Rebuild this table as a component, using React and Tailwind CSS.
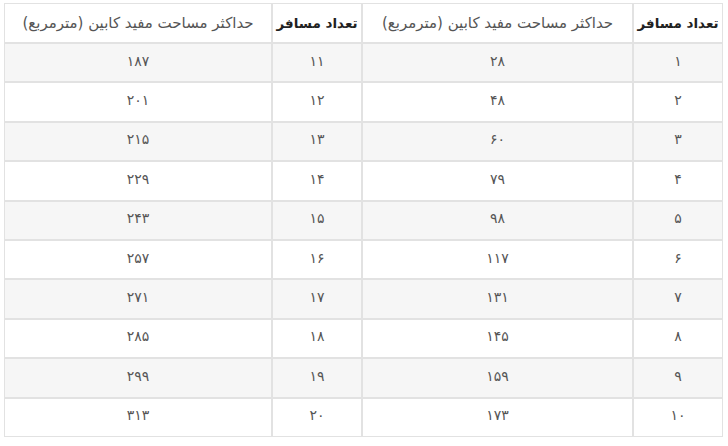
const rows = [
  ["۱", "۲۸", "۱۱", "۱۸۷"],
  ["۲", "۴۸", "۱۲", "۲۰۱"],
  ["۳", "۶۰", "۱۳", "۲۱۵"],
  ["۴", "۷۹", "۱۴", "۲۲۹"],
  ["۵", "۹۸", "۱۵", "۲۴۳"],
  ["۶", "۱۱۷", "۱۶", "۲۵۷"],
  ["۷", "۱۳۱", "۱۷", "۲۷۱"],
  ["۸", "۱۴۵", "۱۸", "۲۸۵"],
  ["۹", "۱۵۹", "۱۹", "۲۹۹"],
  ["۱۰", "۱۷۳", "۲۰", "۳۱۳"],
];

export default function App() {
  const cell = "border border-[#e2e2e2] text-center align-middle p-0";
  return (
    <div className="w-[728px] h-[446px] bg-white pt-[3px] pl-[4px]" style={{ fontFamily: '"DejaVu Sans", sans-serif' }}>
      <table dir="rtl" className="w-[719px] border-separate border-spacing-0 table-fixed text-[14px] text-[#555]">
        <colgroup>
          <col className="w-[90px]" />
          <col className="w-[271px]" />
          <col className="w-[90px]" />
          <col className="w-[268px]" />
        </colgroup>
        <thead>
          <tr className="h-[40px] bg-white">
            <th className={`${cell} font-bold text-[13.5px] text-[#222]`}>تعداد مسافر</th>
            <th className={`${cell} font-normal text-[15px] text-[#555]`}>حداکثر مساحت مفید کابین (مترمربع)</th>
            <th className={`${cell} font-bold text-[13.5px] text-[#222]`}>تعداد مسافر</th>
            <th className={`${cell} font-normal text-[15px] text-[#555]`}>حداکثر مساحت مفید کابین (مترمربع)</th>
          </tr>
        </thead>
        <tbody>
          {rows.map((r, i) => (
            <tr key={i} className={`h-[39.4px] ${i % 2 === 0 ? "bg-[#f6f6f6]" : "bg-white"}`}>
              {r.map((v, j) => (
                <td key={j} className={`${cell} pb-[3px]`}>{v}</td>
              ))}
            </tr>
          ))}
        </tbody>
      </table>
    </div>
  );
}
